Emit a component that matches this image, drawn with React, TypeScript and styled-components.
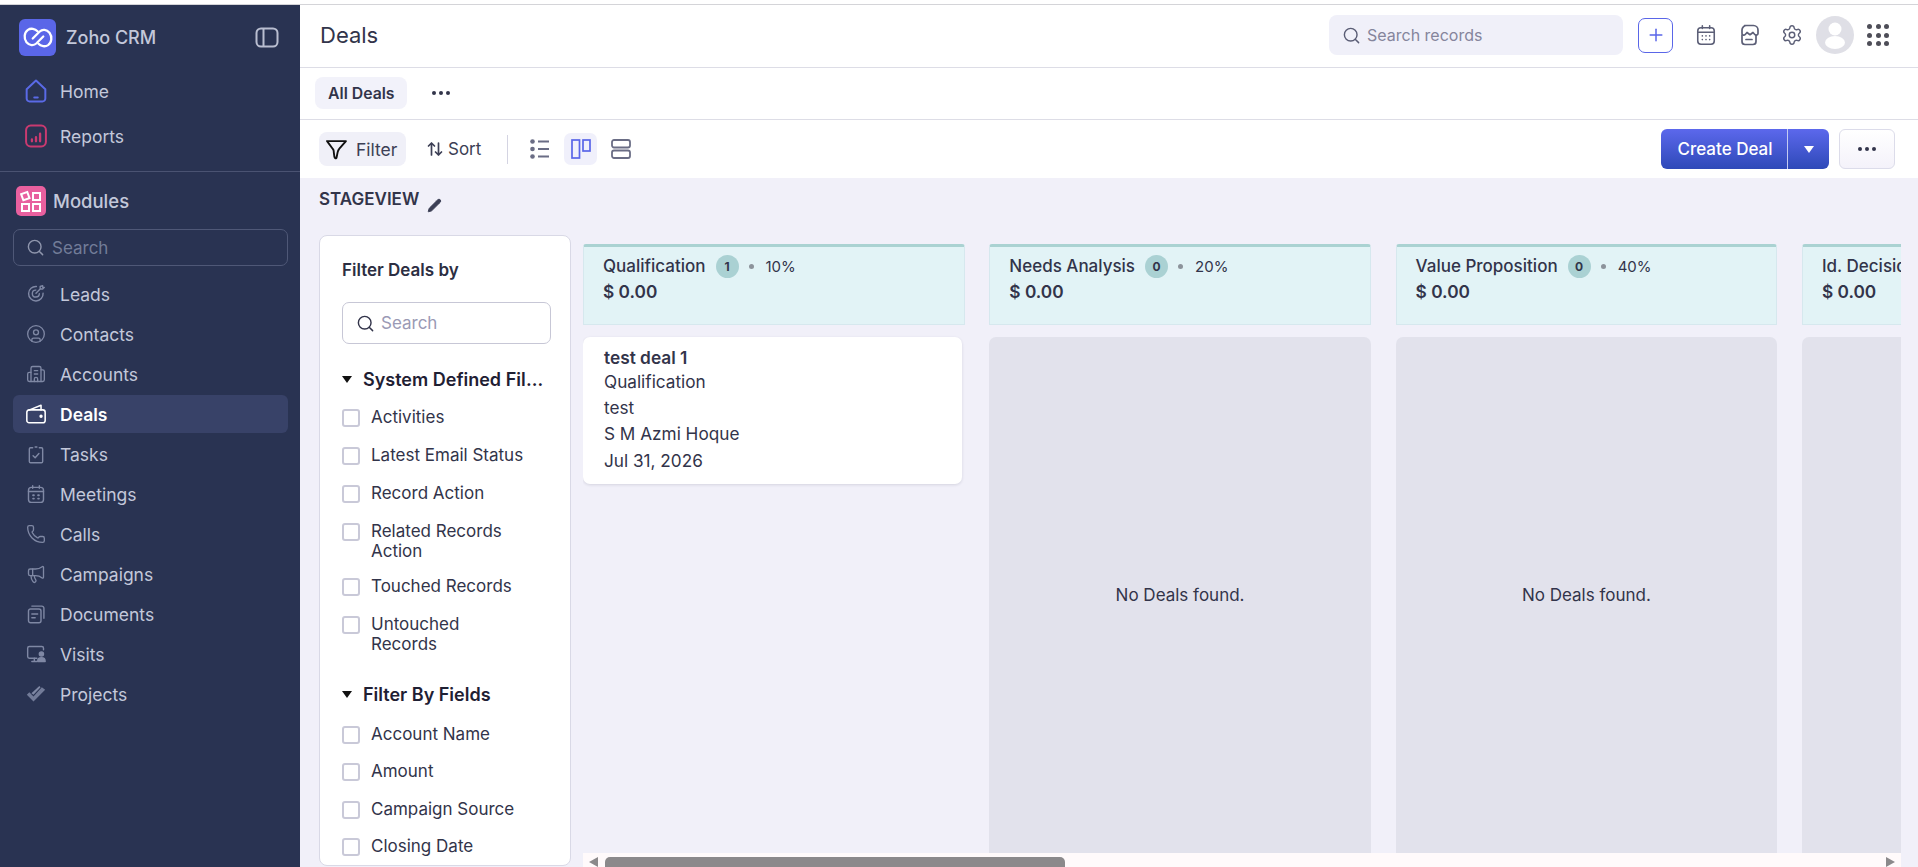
import React from 'react';
import styled, { createGlobalStyle } from 'styled-components';
import { CircleUser, Building2, Phone, Megaphone, Search, Settings, Plus, Pencil } from 'lucide-react';

const GlobalStyle = createGlobalStyle`
  html, body {
    margin: 0;
    padding: 0;
    height: 100%;
    overflow: hidden;
    background: #fff;
    font-family: Inter, "Noto Sans", "Liberation Sans", sans-serif;
    color: #32344a;
  }
  * { box-sizing: border-box; }
`;

type IconProps = { size?: number };

const Svg = ({ size = 20, children }: IconProps & { children: React.ReactNode }) => (
  <svg width={size} height={size} viewBox="0 0 24 24" fill="none" stroke="currentColor" strokeWidth="1.7" strokeLinecap="round" strokeLinejoin="round">
    {children}
  </svg>
);

const LogoIcon = () => (
  <svg width="30" height="23" viewBox="0 0 31 24" fill="none" stroke="#fff" strokeWidth="2.4" strokeLinecap="round">
    <path d="M15 5.500C12.500 2.800 8 2 5 4 1 6.800.5 13 3.500 17c3 3.500 7.500 3.800 10.500 1L21 11" />
    <path d="M16 18.500c2.500 2.700 7 3.500 10 1.500 4-2.800 4.500-9 1.500-13-3-3.500-7.500-3.800-10.500-1L10 13" />
  </svg>
);
const HomeIcon = () => (
  <Svg size={28}>
    <path d="M4 10.500 12 3l8 7.500V18.500a2.500 2.500 0 0 1-2.500 2.500h-11A2.500 2.500 0 0 1 4 18.500z" />
    <path d="M10.500 17.500h3" />
  </Svg>
);
const ReportsIcon = () => (
  <Svg size={28}>
    <rect x="3.500" y="3" width="17" height="18" rx="4" />
    <path d="M8.500 15v1.500M12 13v3.500M15.500 10v6.500" strokeWidth="2" />
  </Svg>
);
const ModulesIcon = () => (
  <svg width="22" height="22" viewBox="0 0 22 22" fill="none" stroke="#fff" strokeWidth="2">
    <rect x="2" y="3" width="6.500" height="6.500" transform="rotate(-20 5 6)" />
    <rect x="13" y="3" width="7" height="7" />
    <rect x="2" y="14" width="7" height="7" />
    <rect x="13" y="14" width="7" height="7" />
  </svg>
);
const LeadsIcon = () => (
  <Svg>
    <path d="M20.500 11a8.700 8.700 0 1 1-8-8" />
    <path d="M16 11.500a4.200 4.200 0 1 1-4.300-4.200" />
    <path d="M12 11l5-5M17 6V3l3-1v2h2l-2 2z" />
  </Svg>
);
const DealsIcon = () => (
  <Svg size={22}>
    <rect x="2" y="7.500" width="20" height="14" rx="2.500" />
    <path d="M5 7.500 17.500 2.500v5" />
    <circle cx="17.500" cy="14.500" r="1" fill="currentColor" />
  </Svg>
);
const TasksIcon = () => (
  <Svg>
    <path d="M8 4.500H5.500A1.500 1.500 0 0 0 4 6v15a1.500 1.500 0 0 0 1.500 1.500h13A1.500 1.500 0 0 0 20 21V6a1.500 1.500 0 0 0-1.500-1.500H16" />
    <path d="M11 3.500h2" />
    <path d="m8.500 14 2.500 2.500 4.500-5" />
  </Svg>
);
const CalendarIcon = ({ size = 20 }: IconProps) => (
  <Svg size={size}>
    <rect x="3" y="4" width="18" height="18" rx="3.500" />
    <path d="M3 9h18M8 2v3M16 2v3" />
    <path d="M8.500 13.500h1M14.500 13.500h1M8.500 17.500h1M14.500 17.500h1" strokeWidth="2.200" />
  </Svg>
);
const PlannerIcon = () => (
  <Svg size={22}>
    <rect x="3" y="4" width="18" height="18" rx="3.500" />
    <path d="M3 9h18M8 2v3M16 2v3" />
    <path d="M8 13h.01M12 13h.01M16 13h.01M8 17h.01M12 17h.01M16 17h.01" strokeWidth="1.800" />
  </Svg>
);
const DocumentsIcon = () => (
  <Svg>
    <rect x="3" y="6" width="15" height="16.500" rx="2.500" />
    <path d="M7 2.500h12a2.500 2.500 0 0 1 2.500 2.500v12" />
    <path d="M7 12h7M7 16.500h4" />
  </Svg>
);
const VisitsIcon = () => (
  <Svg>
    <path d="M13 17H4a2 2 0 0 1-2-2V5a2 2 0 0 1 2-2h15a2 2 0 0 1 2 2v2" />
    <path d="M7 21h6M10 17v4" />
    <circle cx="18.500" cy="12" r="2.500" fill="currentColor" />
    <path d="M14 21c0-3 2-4.500 4.500-4.500S23 18 23 21z" fill="currentColor" />
  </Svg>
);
const ProjectsIcon = () => (
  <svg width="20" height="20" viewBox="0 0 24 24" fill="currentColor">
    <path d="M1 13l3-3 5 5 10-11 4 3-14 14z" opacity=".85" />
    <path d="M6.500 11 16 2.500l1.500 1.500L9 13z" />
  </svg>
);
const PanelIcon = () => (
  <svg width="24" height="21" viewBox="0 0 24 21" fill="none" stroke="currentColor" strokeWidth="2">
    <rect x="1.500" y="1.500" width="21" height="18" rx="4.500" />
    <path d="M8.500 2v17" />
  </svg>
);
const FilterIcon = () => (
  <svg width="21" height="21" viewBox="0 0 20 20" fill="none" stroke="#111" strokeWidth="1.800" strokeLinejoin="round">
    <path d="M1 2h18l-6.500 7.500q-1 1-1.500 3.500l-1 5q-1.500 1-2-1l-.6-4.500Q7.500 10.500 6.500 9.500z" />
  </svg>
);
const SortIcon = () => (
  <svg width="16" height="16" viewBox="0 0 16 16" fill="none" stroke="#3c3f55" strokeWidth="1.700" strokeLinecap="round" strokeLinejoin="round">
    <path d="M4.500 14V2M1.500 5l3-3 3 3M11.500 2v12M8.500 11l3 3 3-3" />
  </svg>
);
const ListIcon = () => (
  <svg width="20" height="20" viewBox="0 0 20 20" fill="none" stroke="#6a6d85" strokeWidth="1.800">
    <circle cx="2.500" cy="2.500" r="2.300" fill="#6a6d85" stroke="none" />
    <circle cx="2.500" cy="10" r="2.300" fill="#6a6d85" stroke="none" />
    <circle cx="2.500" cy="17.500" r="2.300" fill="#6a6d85" stroke="none" />
    <path d="M8 2.500h11M8 10h11M8 17.500h11" />
  </svg>
);
const BoardIcon = () => (
  <svg width="20" height="20" viewBox="0 0 20 20" fill="none" stroke="#5a66e8" strokeWidth="1.700">
    <rect x="1" y="1" width="7.500" height="18" />
    <rect x="12" y="1" width="7" height="11" />
  </svg>
);
const RowsIcon = () => (
  <svg width="20" height="20" viewBox="0 0 20 20" fill="none" stroke="#6a6d85" strokeWidth="1.800">
    <rect x="1" y="1" width="18" height="7.500" rx="2" />
    <rect x="1" y="11.500" width="18" height="7.500" rx="2" />
  </svg>
);
const StoreIcon = () => (
  <Svg size={24}>
    <path d="M5 12v6.500A3 3 0 0 0 8 21.500h8a3 3 0 0 0 3-3V12" />
    <path d="M7.500 2.500h9a4.500 4.500 0 0 1 4.500 4.500v3.500a1.800 1.800 0 0 1-3 1.200l-2-2.200-3 2.200-3-2.200-2 2.200a1.800 1.800 0 0 1-3-1.200V7a4.500 4.500 0 0 1 4.500-4.500z" />
    <path d="M9 16.500h6" />
  </Svg>
);
const UserIcon = () => (
  <svg width="24" height="28" viewBox="0 0 24 28" fill="#fff">
    <circle cx="12" cy="8" r="6.500" />
    <ellipse cx="12" cy="21.500" rx="10" ry="6.500" />
  </svg>
);

const navItems: [string, React.ReactNode][] = [
  ['Leads', <LeadsIcon />],
  ['Contacts', <CircleUser size={20} strokeWidth={1.6} />],
  ['Accounts', <Building2 size={20} strokeWidth={1.6} />],
  ['Deals', <DealsIcon />],
  ['Tasks', <TasksIcon />],
  ['Meetings', <CalendarIcon />],
  ['Calls', <Phone size={20} strokeWidth={1.6} />],
  ['Campaigns', <Megaphone size={20} strokeWidth={1.6} />],
  ['Documents', <DocumentsIcon />],
  ['Visits', <VisitsIcon />],
  ['Projects', <ProjectsIcon />],
];

const systemFilters = ['Activities', 'Latest Email Status', 'Record Action', 'Related Records Action', 'Touched Records', 'Untouched Records'];
const fieldFilters = ['Account Name', 'Amount', 'Campaign Source', 'Closing Date'];

const stages = [
  { name: 'Qualification', count: 1, percent: '10%' },
  { name: 'Needs Analysis', count: 0, percent: '20%' },
  { name: 'Value Proposition', count: 0, percent: '40%' },
  { name: 'Id. Decision Makers', count: 0, percent: '60%' },
];

export default function App() {
  return (
    <Page>
      <GlobalStyle />
      <TopEdge />
      <Shell>
        <Sidebar>
          <Brand>
            <LogoTile><LogoIcon /></LogoTile>
            <BrandName>Zoho CRM</BrandName>
            <PanelToggle><PanelIcon /></PanelToggle>
          </Brand>
          <QuickLinks>
            <QuickLink $color="#5a6ae6"><HomeIcon /><span>Home</span></QuickLink>
            <QuickLink $color="#c93a70"><ReportsIcon /><span>Reports</span></QuickLink>
          </QuickLinks>
          <ModulesHeader>
            <ModulesTile><ModulesIcon /></ModulesTile>
            <span>Modules</span>
          </ModulesHeader>
          <SideSearch>
            <Search size={19} strokeWidth={1.8} />
            <span>Search</span>
          </SideSearch>
          <NavList>
            {navItems.map(([label, icon]) => (
              <NavItem key={label} $active={label === 'Deals'}>
                <NavIcon $active={label === 'Deals'}>{icon}</NavIcon>
                <span>{label}</span>
              </NavItem>
            ))}
          </NavList>
        </Sidebar>

        <Main>
          <Header>
            <Title>Deals</Title>
            <RecordSearch>
              <Search size={19} strokeWidth={1.8} color="#5a5d75" />
              <span>Search records</span>
            </RecordSearch>
            <AddButton><Plus size={20} strokeWidth={1.8} /></AddButton>
            <HeaderIcons>
              <PlannerIcon />
              <StoreIcon />
              <Settings size={22} strokeWidth={1.6} />
            </HeaderIcons>
            <Avatar><UserIcon /></Avatar>
            <AppsGrid>
              {Array.from({ length: 9 }).map((_, i) => <AppsDot key={i} />)}
            </AppsGrid>
          </Header>

          <TabsBar>
            <TabPill>All Deals</TabPill>
            <Dots><i /><i /><i /></Dots>
          </TabsBar>

          <Toolbar>
            <FilterButton><FilterIcon /><span>Filter</span></FilterButton>
            <SortButton><SortIcon /><span>Sort</span></SortButton>
            <ToolDivider />
            <ListButton><ListIcon /></ListButton>
            <ViewButton $active><BoardIcon /></ViewButton>
            <ViewButton><RowsIcon /></ViewButton>
            <CreateGroup>
              <CreateMain>Create Deal</CreateMain>
              <CreateCaret><Caret $color="#fff" /></CreateCaret>
            </CreateGroup>
            <MoreButton><Dots><i /><i /><i /></Dots></MoreButton>
          </Toolbar>

          <Content>
            <ViewTitle>
              <span>STAGEVIEW</span>
              <EditIcon><Pencil size={15} fill="#3c3f55" strokeWidth={1.5} /></EditIcon>
            </ViewTitle>
            <Workspace>
              <FilterPanel>
                <FilterTitle>Filter Deals by</FilterTitle>
                <FilterSearch>
                  <Search size={19} strokeWidth={1.8} color="#32344a" />
                  <span>Search</span>
                </FilterSearch>
                <FilterSection>
                  <Caret $color="#111" />
                  <SectionName>System Defined Filters</SectionName>
                </FilterSection>
                {systemFilters.map(label => (
                  <FilterOption key={label}><CheckBox /><span>{label}</span></FilterOption>
                ))}
                <FilterSection $spaced>
                  <Caret $color="#111" />
                  <SectionName>Filter By Fields</SectionName>
                </FilterSection>
                {fieldFilters.map(label => (
                  <FieldOption key={label}><CheckBox /><span>{label}</span></FieldOption>
                ))}
              </FilterPanel>

              <Board>
                <Columns>
                  {stages.map(stage => (
                    <Column key={stage.name}>
                      <StageHead>
                        <StageRow>
                          <StageName>{stage.name}</StageName>
                          <CountBadge>{stage.count}</CountBadge>
                          <StageDot />
                          <StagePercent>{stage.percent}</StagePercent>
                        </StageRow>
                        <StageAmount>$ 0.00</StageAmount>
                      </StageHead>
                      {stage.count > 0 ? (
                        <DealCard>
                          <DealName>test deal 1</DealName>
                          <DealLine>Qualification</DealLine>
                          <DealLine>test</DealLine>
                          <DealLine>S M Azmi Hoque</DealLine>
                          <DealLine>Jul 31, 2026</DealLine>
                        </DealCard>
                      ) : (
                        <EmptyLane>{stage.name === 'Id. Decision Makers' ? '' : 'No Deals found.'}</EmptyLane>
                      )}
                    </Column>
                  ))}
                </Columns>
                <ScrollTrack>
                  <ArrowLeft />
                  <ScrollThumb />
                  <ArrowRight />
                </ScrollTrack>
              </Board>
            </Workspace>
          </Content>
        </Main>
      </Shell>
    </Page>
  );
}

const Page = styled.div`
  display: flex;
  flex-direction: column;
  height: 100vh;
  overflow: hidden;
`;

const TopEdge = styled.div`
  flex: none;
  height: 5px;
  background: #fff;
  border-bottom: 1px solid #d4d4d8;
`;

const Shell = styled.div`
  flex: 1;
  display: flex;
  min-height: 0;
`;

const Sidebar = styled.aside`
  flex: none;
  width: 300px;
  display: flex;
  flex-direction: column;
  background: #293352;
  color: #c3c8da;
`;

const Brand = styled.div`
  display: flex;
  align-items: center;
  height: 62px;
  padding: 2px 21px 0 19px;
`;

const LogoTile = styled.div`
  display: flex;
  align-items: center;
  justify-content: center;
  width: 37px;
  height: 37px;
  border-radius: 6px;
  background: #5a66e8;
`;

const BrandName = styled.div`
  flex: 1;
  margin-left: 10px;
  font-size: 18px;
  font-weight: 500;
`;

const PanelToggle = styled.div`
  display: flex;
  color: #b9bed0;
`;

const QuickLinks = styled.div`
  display: flex;
  flex-direction: column;
  gap: 5px;
  height: 105px;
  padding-top: 4px;
  border-bottom: 1px solid #4a5372;
`;

const QuickLink = styled.div<{ $color: string }>`
  display: flex;
  align-items: center;
  gap: 10px;
  height: 40px;
  padding-left: 22px;
  font-size: 17.500px;
  svg { color: ${({ $color }) => $color}; }
`;

const ModulesHeader = styled.div`
  display: flex;
  align-items: center;
  gap: 7px;
  height: 30px;
  margin-top: 14px;
  padding-left: 16px;
  font-size: 18.500px;
  font-weight: 500;
`;

const ModulesTile = styled.div`
  display: flex;
  align-items: center;
  justify-content: center;
  width: 30px;
  height: 30px;
  border-radius: 5px;
  background: #e8609f;
`;

const SideSearch = styled.div`
  display: flex;
  align-items: center;
  gap: 7px;
  height: 37px;
  margin: 13px 12px 0 13px;
  padding-left: 12px;
  border: 1px solid #4f5877;
  border-radius: 7px;
  font-size: 17px;
  color: #727c98;
  svg { color: #8f96ad; }
`;

const NavList = styled.nav`
  display: flex;
  flex-direction: column;
  gap: 2px;
  margin-top: 9px;
  padding: 0 12px 0 13px;
`;

const NavItem = styled.div<{ $active?: boolean }>`
  display: flex;
  align-items: center;
  height: 38px;
  border-radius: 6px;
  font-size: 17.500px;
  font-weight: ${({ $active }) => ($active ? 600 : 400)};
  color: ${({ $active }) => ($active ? '#fff' : '#c3c8da')};
  background: ${({ $active }) => ($active ? '#384268' : 'transparent')};
`;

const NavIcon = styled.span<{ $active?: boolean }>`
  display: flex;
  justify-content: center;
  width: 47px;
  padding-right: 1px;
  color: ${({ $active }) => ($active ? '#fff' : '#7f88a4')};
`;

const Main = styled.main`
  flex: 1;
  min-width: 0;
  display: flex;
  flex-direction: column;
`;

const Header = styled.header`
  flex: none;
  display: flex;
  align-items: center;
  height: 63px;
  padding: 0 29px 2px 20px;
  border-bottom: 1px solid #dddde6;
`;

const Title = styled.h1`
  flex: 1;
  margin: 0;
  font-size: 22px;
  font-weight: 400;
  color: #32344a;
`;

const RecordSearch = styled.div`
  display: flex;
  align-items: center;
  gap: 6px;
  width: 294px;
  height: 40px;
  padding-left: 13px;
  border-radius: 8px;
  background: #f0f0f9;
  font-size: 16px;
  color: #85859c;
`;

const AddButton = styled.div`
  display: flex;
  align-items: center;
  justify-content: center;
  width: 35px;
  height: 35px;
  margin-left: 15px;
  border: 1px solid #5a66e8;
  border-radius: 7px;
  color: #5a66e8;
`;

const HeaderIcons = styled.div`
  display: flex;
  align-items: center;
  gap: 20px;
  margin-left: 22px;
  color: #5c5f77;
`;

const Avatar = styled.div`
  display: flex;
  align-items: center;
  justify-content: center;
  width: 38px;
  height: 38px;
  margin-left: 13px;
  border-radius: 50%;
  background: #dfdfe6;
`;

const AppsGrid = styled.div`
  display: grid;
  grid-template-columns: repeat(3, 5px);
  gap: 3.500px;
  margin-left: 13px;
`;

const AppsDot = styled.span`
  width: 5px;
  height: 5px;
  border-radius: 50%;
  background: #4e4e58;
`;

const TabsBar = styled.div`
  flex: none;
  display: flex;
  align-items: center;
  height: 52px;
  padding: 0 0 1px 15px;
  border-bottom: 1px solid #dddde6;
`;

const TabPill = styled.div`
  display: flex;
  align-items: center;
  height: 32px;
  padding: 0 12px 0 13px;
  border-radius: 8px;
  background: #f2f2fa;
  font-size: 15.800px;
  font-weight: 600;
`;

const Dots = styled.span`
  display: inline-flex;
  gap: 2.500px;
  margin-left: 25px;
  i {
    width: 4.500px;
    height: 4.500px;
    border-radius: 50%;
    background: #32344a;
  }
`;

const Toolbar = styled.div`
  flex: none;
  display: flex;
  align-items: center;
  height: 58px;
  padding: 0 23px 0 19px;
`;

const FilterButton = styled.div`
  display: flex;
  align-items: center;
  gap: 9px;
  width: 87px;
  height: 34px;
  padding-left: 7px;
  border-radius: 8px;
  background: #f0f0f8;
  font-size: 17.500px;
  color: #3c3f55;
`;

const SortButton = styled.div`
  display: flex;
  align-items: center;
  gap: 5px;
  margin-left: 21px;
  font-size: 17px;
  color: #3c3f55;
`;

const ToolDivider = styled.div`
  width: 1px;
  height: 29px;
  margin: 0 22px 0 26px;
  background: #d4d4e2;
`;

const ListButton = styled.div`
  display: flex;
  align-items: center;
  margin-right: 14px;
`;

const ViewButton = styled.div<{ $active?: boolean }>`
  display: flex;
  align-items: center;
  justify-content: center;
  width: 33px;
  height: 32px;
  margin-right: 7px;
  border-radius: 7px;
  background: ${({ $active }) => ($active ? '#f0f0fb' : 'transparent')};
`;

const CreateGroup = styled.div`
  display: flex;
  height: 40px;
  margin-left: auto;
  border-radius: 6px;
  overflow: hidden;
  background: linear-gradient(180deg, #5c68ec 0%, #2e49b8 100%);
  color: #fff;
`;

const CreateMain = styled.div`
  display: flex;
  align-items: center;
  justify-content: center;
  width: 126px;
  padding-left: 2px;
  font-size: 17px;
  font-weight: 500;
`;

const CreateCaret = styled.div`
  display: flex;
  align-items: center;
  justify-content: center;
  width: 42px;
  border-left: 1px solid #c3cbf2;
`;

const Caret = styled.span<{ $color: string }>`
  flex: none;
  width: 0;
  height: 0;
  border-left: 5.500px solid transparent;
  border-right: 5.500px solid transparent;
  border-top: 7px solid ${({ $color }) => $color};
`;

const MoreButton = styled.div`
  display: flex;
  align-items: center;
  justify-content: center;
  width: 56px;
  height: 40px;
  margin-left: 10px;
  border: 1px solid #dcdcea;
  border-radius: 6px;
  background: linear-gradient(180deg, #fff 0%, #f4f2fa 100%);
  ${Dots} { margin-left: 0; }
`;

const Content = styled.div`
  flex: 1;
  min-height: 0;
  display: flex;
  flex-direction: column;
  padding: 0 17px 0 19px;
  background: #f1f0f9;
`;

const ViewTitle = styled.div`
  flex: none;
  display: flex;
  align-items: flex-start;
  height: 57px;
  padding-top: 11px;
  font-size: 17px;
  font-weight: 600;
  color: #32344a;
`;

const EditIcon = styled.span`
  display: flex;
  margin: 9px 0 0 8px;
  color: #3c3f55;
`;

const Workspace = styled.div`
  flex: 1;
  min-height: 0;
  display: flex;
  gap: 12px;
`;

const FilterPanel = styled.section`
  flex: none;
  width: 252px;
  margin-bottom: 1px;
  padding: 0 19px 0 22px;
  overflow: hidden;
  border: 1px solid #d9d9e6;
  border-radius: 8px;
  background: #fff;
`;

const FilterTitle = styled.div`
  margin-top: 24px;
  font-size: 17px;
  line-height: 20px;
  font-weight: 600;
  color: #2c2e42;
`;

const FilterSearch = styled.div`
  display: flex;
  align-items: center;
  gap: 6px;
  width: 209px;
  height: 42px;
  margin-top: 22px;
  padding-left: 13px;
  border: 1px solid #c7c7d6;
  border-radius: 7px;
  font-size: 17px;
  color: #9a9ab5;
`;

const FilterSection = styled.div<{ $spaced?: boolean }>`
  display: flex;
  align-items: center;
  gap: 11px;
  height: 24px;
  margin-top: ${({ $spaced }) => ($spaced ? '28px' : '23px')};
  margin-bottom: ${({ $spaced }) => ($spaced ? '19px' : '17px')};
  padding-right: 6px;
`;

const SectionName = styled.div`
  min-width: 0;
  overflow: hidden;
  white-space: nowrap;
  text-overflow: ellipsis;
  font-size: 18px;
  font-weight: 600;
  color: #1f2033;
`;

const FilterOption = styled.label`
  display: flex;
  align-items: flex-start;
  gap: 11px;
  min-height: 22px;
  margin-bottom: 16px;
  padding-right: 25px;
  font-size: 17px;
  line-height: 19.500px;
`;

const FieldOption = styled(FilterOption)`
  margin-bottom: 15.300px;
`;

const CheckBox = styled.span`
  flex: none;
  width: 18px;
  height: 18px;
  margin-top: 1px;
  border: 2px solid #c9c9d8;
  border-radius: 3px;
  background: #fff;
`;

const Board = styled.div`
  flex: 1;
  min-width: 0;
  display: flex;
  flex-direction: column;
`;

const Columns = styled.div`
  flex: 1;
  min-height: 0;
  display: flex;
  gap: 24.800px;
  padding-top: 9px;
  overflow: hidden;
`;

const Column = styled.div`
  flex: none;
  width: 381.500px;
  display: flex;
  flex-direction: column;
  gap: 12px;
`;

const StageHead = styled.div`
  flex: none;
  height: 81px;
  padding: 7px 19px 0;
  border: 1px solid #d6e8ee;
  border-top: 3px solid #aad2d2;
  border-radius: 3px 3px 0 0;
  background: #e2f3f6;
`;

const StageRow = styled.div`
  display: flex;
  align-items: center;
  height: 24px;
`;

const StageName = styled.span`
  font-size: 17px;
  font-weight: 500;
  white-space: nowrap;
`;

const CountBadge = styled.span`
  display: flex;
  align-items: center;
  justify-content: center;
  flex: none;
  width: 23px;
  height: 23px;
  margin-left: 10px;
  border-radius: 50%;
  background: #aad1d3;
  font-size: 12px;
  font-weight: 700;
`;

const StageDot = styled.span`
  flex: none;
  width: 5px;
  height: 5px;
  margin-left: 10px;
  border-radius: 50%;
  background: #8c939b;
`;

const StagePercent = styled.span`
  margin-left: 12px;
  font-size: 15px;
`;

const StageAmount = styled.div`
  margin-top: 2px;
  font-size: 17.300px;
  line-height: 24px;
  font-weight: 600;
`;

const DealCard = styled.div`
  width: 379px;
  height: 147px;
  padding: 10px 21px 0;
  border-radius: 7px;
  background: #fff;
  box-shadow: 0 1px 3px rgba(40, 40, 70, 0.14);
`;

const DealName = styled.div`
  font-size: 17.300px;
  line-height: 22px;
  font-weight: 600;
`;

const DealLine = styled.div`
  font-size: 17.200px;
  line-height: 26.300px;
  &:nth-child(2) { line-height: 26px; }
`;

const EmptyLane = styled.div`
  flex: 1;
  display: flex;
  align-items: center;
  justify-content: center;
  border-radius: 7px 7px 0 0;
  background: #e2e2ec;
  font-size: 17px;
`;

const ScrollTrack = styled.div`
  flex: none;
  display: flex;
  align-items: flex-end;
  height: 14px;
  padding: 0 6px 0 6px;
  background: #fffafb;
`;

const ArrowLeft = styled.span`
  flex: none;
  width: 0;
  height: 0;
  border-top: 5px solid transparent;
  border-bottom: 5px solid transparent;
  border-right: 9px solid #8b898b;
`;

const ArrowRight = styled.span`
  flex: none;
  width: 0;
  height: 0;
  margin-left: auto;
  border-top: 5px solid transparent;
  border-bottom: 5px solid transparent;
  border-left: 9px solid #8b898b;
`;

const ScrollThumb = styled.span`
  flex: none;
  width: 460px;
  height: 10px;
  margin-left: 7px;
  border-radius: 5px 5px 0 0;
  background: #8b898b;
`;
